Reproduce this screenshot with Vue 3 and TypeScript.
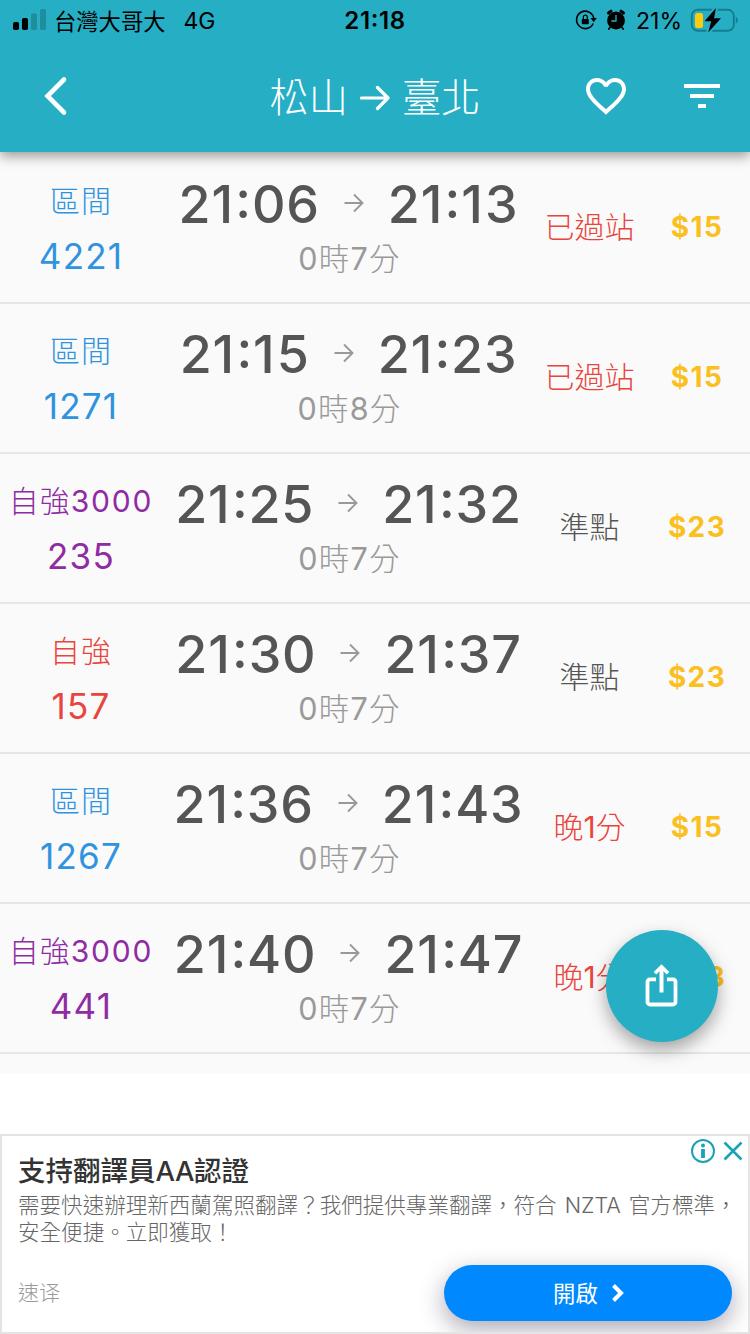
<script setup lang="ts">
type Part = { text: string; latin: boolean }

interface Train {
  kind: string
  no: string
  tone: 'blue' | 'purple' | 'red'
  depart: string
  arrive: string
  minutes: number
  status: string
  late: boolean
  price: number
}

const trains: Train[] = [
  { kind: '區間', no: '4221', tone: 'blue', depart: '21:06', arrive: '21:13', minutes: 7, status: '已過站', late: true, price: 15 },
  { kind: '區間', no: '1271', tone: 'blue', depart: '21:15', arrive: '21:23', minutes: 8, status: '已過站', late: true, price: 15 },
  { kind: '自強3000', no: '235', tone: 'purple', depart: '21:25', arrive: '21:32', minutes: 7, status: '準點', late: false, price: 23 },
  { kind: '自強', no: '157', tone: 'red', depart: '21:30', arrive: '21:37', minutes: 7, status: '準點', late: false, price: 23 },
  { kind: '區間', no: '1267', tone: 'blue', depart: '21:36', arrive: '21:43', minutes: 7, status: '晚1分', late: true, price: 15 },
  { kind: '自強3000', no: '441', tone: 'purple', depart: '21:40', arrive: '21:47', minutes: 7, status: '晚1分', late: true, price: 23 },
]

// Digits are set heavier than the light Chinese characters around them.
function parts(value: string): Part[] {
  return (value.match(/\d+|\D+/g) ?? []).map((text) => ({ text, latin: /\d/.test(text) }))
}
</script>

<template>
  <div class="screen">
    <header class="top">
      <div class="statusbar">
        <div class="sb-left">
          <svg class="signal" width="34" height="22" viewBox="0 0 34 22">
            <rect x="0" y="13" width="6" height="8" rx="1.8" fill="#000" />
            <rect x="9" y="9" width="6" height="12" rx="1.8" fill="#000" />
            <rect x="18" y="4.500" width="6" height="16.500" rx="1.800" fill="#1e8d9d" />
            <rect x="27" y="0" width="6" height="21" rx="1.8" fill="#1e8d9d" />
          </svg>
          <span class="carrier">台灣大哥大</span>
          <span class="net">4G</span>
        </div>
        <div class="clock">21:18</div>
        <div class="sb-right">
          <svg class="lock" width="22" height="22" viewBox="0 0 22 22">
            <path d="M18.800 9A8.700 8.700 0 1 0 18.200 14.500" fill="none" stroke="#000" stroke-width="1.600" />
            <path d="M15.600 9h6.200l-3.100 4.200z" fill="#000" />
            <rect x="6.800" y="10" width="7" height="5.200" rx=".8" fill="#000" />
            <path d="M8.300 10.200V8.200a2 2 0 0 1 4 0v2" fill="none" stroke="#000" stroke-width="1.200" />
          </svg>
          <svg class="alarm" width="20" height="22" viewBox="0 0 20 22">
            <circle cx="10" cy="11.500" r="8.900" fill="#000" />
            <path d="M2.500 4L5 2.200M17.500 4L15 2.200" stroke="#000" stroke-width="3" stroke-linecap="round" />
            <path d="M4 18.500L2.800 20M16 18.500l1.200 1.500" stroke="#000" stroke-width="1.800" stroke-linecap="round" />
            <path d="M10 6v6H5.300" fill="none" stroke="#26aec4" stroke-width="1.300" />
          </svg>
          <span class="percent">21%</span>
          <svg class="battery" width="50" height="26" viewBox="0 0 50 26">
            <rect x="2.800" y="2.800" width="42" height="21" rx="6" fill="none" stroke="#167d8e" stroke-width="1.900" />
            <path d="M46.800 9.500q2 1.500 2 3.800t-2 3.800z" fill="#167d8e" />
            <path d="M27 1L15.500 14.300h6.700l-3 11.200L32 11.300h-7z" fill="#000" stroke="#26aec4" stroke-width="4" paint-order="stroke" />
            <rect x="6" y="6" width="8" height="15" rx="2.500" fill="#ffcc0c" />
          </svg>
        </div>
      </div>
      <nav class="nav">
        <svg class="back" width="30" height="44" viewBox="0 0 30 44">
          <path d="M22 5.500L5.500 22 22 38.500" fill="none" stroke="#fff" stroke-width="4.600" stroke-linecap="round" />
        </svg>
        <h1 class="title">
          <span>松山</span>
          <svg width="30" height="26" viewBox="0 0 30 26">
            <path d="M1.500 13H28M17.500 2.500L28 13 17.500 23.500" fill="none" stroke="#fff" stroke-width="3.200" stroke-linecap="round" stroke-linejoin="round" />
          </svg>
          <span>臺北</span>
        </h1>
        <div class="actions">
          <svg width="48" height="48" viewBox="0 0 24 24" fill="#fff">
            <path d="M16.500 3c-1.740 0-3.410.81-4.500 2.090C10.910 3.810 9.240 3 7.500 3 4.420 3 2 5.420 2 8.500c0 3.780 3.400 6.860 8.550 11.540L12 21.350l1.450-1.320C18.600 15.360 22 12.280 22 8.500 22 5.420 19.580 3 16.500 3zm-4.400 15.550l-.1.100-.1-.100C7.140 14.240 4 11.390 4 8.500 4 6.500 5.500 5 7.500 5c1.540 0 3.040.990 3.570 2.360h1.870C13.460 5.990 14.960 5 16.500 5c2 0 3.500 1.500 3.500 3.500 0 2.890-3.140 5.740-7.900 10.050z" />
          </svg>
          <svg width="48" height="48" viewBox="0 0 24 24" fill="#fff">
            <path d="M10 18h4v-2h-4v2zM3 6v2h18V6H3zm3 7h12v-2H6v2z" />
          </svg>
        </div>
      </nav>
    </header>

    <main class="list">
      <article v-for="t in trains" :key="t.no" class="row">
        <div class="train" :class="t.tone">
          <div class="kind">
            <span v-for="p in parts(t.kind)" :key="p.text" :class="{ latin: p.latin }">{{ p.text }}</span>
          </div>
          <div class="no">{{ t.no }}</div>
        </div>
        <div class="trip">
          <div class="times">
            <span class="time"><span v-for="(c, i) in t.depart" :key="i" :class="{ one: c === '1' }">{{ c }}</span></span>
            <svg width="20" height="20" viewBox="0 0 20 20">
              <path d="M.5 10H18.500M10 1.500L18.500 10 10 18.500" fill="none" stroke="#999" stroke-width="1.900" />
            </svg>
            <span class="time"><span v-for="(c, i) in t.arrive" :key="i" :class="{ one: c === '1' }">{{ c }}</span></span>
          </div>
          <div class="duration">
            <span class="latin">0</span>時<span class="latin">{{ t.minutes }}</span>分
          </div>
        </div>
        <div class="status" :class="{ late: t.late }">
          <span v-for="p in parts(t.status)" :key="p.text" :class="{ latin: p.latin }">{{ p.text }}</span>
        </div>
        <div class="price">${{ t.price }}</div>
      </article>
      <button class="share" type="button">
        <svg width="36" height="46" viewBox="0 0 36 46">
          <path d="M12 16.300H6a2.500 2.500 0 0 0-2.500 2.500V39a2.500 2.500 0 0 0 2.500 2.500h23a2.500 2.500 0 0 0 2.500-2.500V18.800a2.500 2.500 0 0 0-2.500-2.500H23" fill="none" stroke="#fff" stroke-width="3.800" />
          <path d="M17.500 5v24.500" stroke="#fff" stroke-width="4" />
          <path d="M11 10.300L17.500 3.800l6.500 6.500" fill="none" stroke="#fff" stroke-width="3.600" />
        </svg>
      </button>
    </main>

    <aside class="ad">
      <div class="ad-marks">
        <svg width="26" height="26" viewBox="0 0 26 26">
          <circle cx="13" cy="13" r="11" fill="none" stroke="#1ba2b8" stroke-width="2" />
          <circle cx="13" cy="7.600" r="2" fill="#1ba2b8" />
          <path d="M13 11v9" stroke="#1ba2b8" stroke-width="3.800" />
        </svg>
        <svg width="20" height="20" viewBox="0 0 20 20">
          <path d="M1.500 1.500l17 17M18.500 1.500l-17 17" stroke="#1ba2b8" stroke-width="2.500" />
        </svg>
      </div>
      <h2 class="ad-title">支持翻譯員<span class="aa">AA</span>認證</h2>
      <p class="ad-body">需要快速辦理新西蘭駕照翻譯？我們提供專業翻譯，符合<span class="nzta">NZTA</span>官方標準，<br />安全便捷。立即獲取！</p>
      <div class="ad-foot">
        <span class="brand">速译</span>
        <button class="open" type="button">
          <span class="open-label">開啟</span>
          <svg width="14" height="20" viewBox="0 0 14 20">
            <path d="M2.500 2.500L10 10l-7.500 7.500" fill="none" stroke="#fff" stroke-width="4" />
          </svg>
        </button>
      </div>
    </aside>
  </div>
</template>

<style>
body {
  margin: 0;
  background: #fff;
}
</style>

<style scoped>
.screen {
  width: 750px;
  height: 1334px;
  overflow: hidden;
  display: flex;
  flex-direction: column;
  background: #fff;
  font-family: Inter, "Noto Sans CJK TC", sans-serif;
}
.top {
  position: relative;
  z-index: 2;
  flex: none;
  height: 152px;
  background: #26aec4;
  box-shadow: 0 4px 12px rgba(0, 0, 0, 0.4);
}
.statusbar {
  display: grid;
  grid-template-columns: 1fr auto 1fr;
  align-items: center;
  height: 40px;
  color: #000;
  font-size: 22px;
  line-height: 40px;
}
.sb-left {
  display: flex;
  align-items: center;
  padding-left: 13px;
}
.carrier {
  margin-left: 7px;
  padding-top: 3px;
  font-size: 22.3px;
  line-height: 37px;
}
.net {
  margin-left: 18px;
  padding-top: 2px;
  font-size: 23px;
  line-height: 38px;
}
.clock {
  padding-top: 2px;
  font-size: 24px;
  line-height: 38px;
  font-weight: 600;
  letter-spacing: 0.6px;
  font-feature-settings: "calt" 1, "case" 1;
}
.sb-right {
  display: flex;
  justify-content: flex-end;
  align-items: center;
  padding-right: 11px;
}
.alarm {
  margin-left: 9px;
}
.percent {
  margin-left: 10px;
  padding-top: 2px;
  font-size: 23px;
  line-height: 38px;
}
.battery {
  margin-left: 7px;
}
.nav {
  display: grid;
  grid-template-columns: 200px 1fr 200px;
  align-items: center;
  height: 112px;
}
.back {
  margin-left: 42px;
}
.title {
  display: flex;
  align-items: center;
  justify-content: center;
  gap: 12px;
  margin: 0;
  padding-top: 3px;
  color: #fff;
  font-size: 39.3px;
  line-height: 56px;
  font-weight: 300;
}
.actions {
  display: flex;
  justify-content: flex-end;
  gap: 48px;
  padding-right: 24px;
}
.list {
  position: relative;
  flex: none;
  height: 922px;
  box-sizing: border-box;
  padding-top: 2px;
  background: #fafafa;
}
.row {
  display: grid;
  grid-template-columns: 160px 377px 105px 108px;
  align-items: center;
  height: 150px;
  box-sizing: border-box;
  border-bottom: 2px solid #e6e6e6;
  text-align: center;
}
.train {
  padding: 1px 0 0 2px;
  font-weight: 300;
}
.blue {
  color: #2f93e0;
}
.purple {
  color: #8f2ba3;
}
.red {
  color: #e8453c;
}
.kind {
  height: 55px;
  font-size: 30px;
  line-height: 55px;
  letter-spacing: 1px;
  white-space: nowrap;
}
.kind .latin {
  letter-spacing: 1.8px;
}
.no {
  height: 55px;
  font-size: 35px;
  line-height: 55px;
  font-weight: 400;
  letter-spacing: 1.2px;
}
.latin {
  font-weight: 400;
}
.trip {
  padding-top: 6px;
}
.times {
  display: flex;
  align-items: center;
  justify-content: center;
  gap: 24px;
  height: 55px;
  color: #555;
  font-size: 52px;
  line-height: 55px;
  font-weight: 500;
  font-kerning: none;
  font-feature-settings: "case" 1;
  letter-spacing: 0.8px;
}
.one {
  letter-spacing: 2.3px;
}
.times svg {
  margin-bottom: 2px;
}
.duration {
  height: 54px;
  padding-left: 2px;
  color: #999;
  font-size: 30.5px;
  line-height: 54px;
  font-weight: 300;
  letter-spacing: 1.2px;
}
.status {
  padding-bottom: 6px;
  color: #555;
  font-size: 30px;
  font-weight: 300;
  white-space: nowrap;
}
.status.late {
  color: #e8453c;
}
.price {
  padding: 0 0 2px 2px;
  color: #fbbf1e;
  font-size: 28px;
  font-weight: 700;
  letter-spacing: 1.4px;
}
.share {
  position: absolute;
  left: 606px;
  top: 778px;
  display: flex;
  align-items: center;
  justify-content: center;
  width: 112px;
  height: 112px;
  padding: 0;
  border: 0;
  border-radius: 50%;
  background: #26aec4;
  box-shadow: 0 8px 18px rgba(0, 0, 0, 0.35);
}
.ad {
  position: relative;
  flex: none;
  height: 200px;
  box-sizing: border-box;
  margin-top: 60px;
  padding: 17px 16px 0;
  border: 2px solid #e4e4e4;
  overflow: hidden;
}
.ad-marks {
  position: absolute;
  right: 5px;
  top: 2px;
  display: flex;
  align-items: center;
  gap: 7px;
}
.ad-title {
  margin: 0;
  color: #333;
  font-size: 27.5px;
  line-height: 36px;
  font-weight: 500;
}
.aa {
  letter-spacing: -0.5px;
}
.ad-body {
  margin: 3px 0 0;
  color: #666;
  font-size: 21.55px;
  line-height: 26.5px;
  font-weight: 300;
  white-space: nowrap;
}
.nzta {
  margin: 0 8px;
}
.ad-foot {
  display: flex;
  align-items: center;
  justify-content: space-between;
  margin-top: 20px;
}
.brand {
  padding-bottom: 5px;
  color: #999;
  font-size: 21px;
  font-weight: 300;
}
.open {
  display: flex;
  align-items: center;
  justify-content: center;
  gap: 13px;
  width: 288px;
  height: 56px;
  padding: 0 0 0 2px;
  border: 0;
  border-radius: 28px;
  background: #0088ff;
  color: #fff;
  font-family: inherit;
  font-size: 22.4px;
  box-shadow: 0 8px 24px rgba(40, 40, 70, 0.4);
}
.open-label {
  padding-bottom: 2px;
}
</style>
